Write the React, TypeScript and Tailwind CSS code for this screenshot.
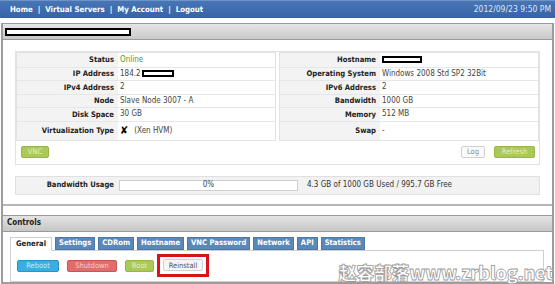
import React from "react";

const font = "font-['DejaVu_Sans_Condensed','DejaVu_Sans',sans-serif]";

type Row = { label: string; value: React.ReactNode; tall?: boolean };

function Redacted({ w }: { w: number }) {
  return (
    <span
      className="inline-block h-[7px] border-2 border-black bg-white align-middle"
      style={{ width: w }}
    />
  );
}

function InfoTable({ rows, labelW }: { rows: Row[]; labelW: string }) {
  return (
    <div className="flex-1 border border-[#e2e2e2]">
      {rows.map((r, i) => (
        <div
          key={r.label}
          className={`flex ${r.tall ? "h-[19px]" : "h-[13.5px]"} ${i > 0 ? "border-t border-[#e6e6e6]" : ""}`}
        >
          <div className={`${labelW} flex shrink-0 items-center justify-end bg-[#f3f3f3] pr-[4px] text-right text-[7.6px] font-bold text-[#222]`}>
            {r.label}
          </div>
          <div className="flex items-center pl-[2px] text-[#444]">{r.value}</div>
        </div>
      ))}
    </div>
  );
}

function Btn({ label, cls }: { label: string; cls: string }) {
  return (
    <span className={`inline-flex h-[12px] items-center justify-center rounded-[2px] border text-[7.5px] ${cls}`}>
      {label}
    </span>
  );
}

function Sep() {
  return <span className="mx-[5px]">|</span>;
}

export default function App() {
  const left: Row[] = [
    { label: "Status", value: <span className="text-[#4c9a2a]">Online</span> },
    { label: "IP Address", value: <span className="flex items-center gap-[1px]">184.2<Redacted w={32} /></span> },
    { label: "IPv4 Address", value: "2" },
    { label: "Node", value: "Slave Node 3007 - A" },
    { label: "Disk Space", value: "30 GB" },
    {
      label: "Virtualization Type",
      tall: true,
      value: (
        <span className="flex items-center gap-[6px]">
          <span className="text-[11px] font-bold leading-none text-black">✘</span>(Xen HVM)
        </span>
      ),
    },
  ];
  const right: Row[] = [
    { label: "Hostname", value: <Redacted w={40} /> },
    { label: "Operating System", value: "Windows 2008 Std SP2 32Bit" },
    { label: "IPv6 Address", value: "2" },
    { label: "Bandwidth", value: "1000 GB" },
    { label: "Memory", value: "512 MB" },
    { label: "Swap", value: "-", tall: true },
  ];
  const tabs = ["Settings", "CDRom", "Hostname", "VNC Password", "Network", "API", "Statistics"];

  return (
    <div className={`relative h-[284px] w-[555px] overflow-hidden bg-white text-[8px] ${font}`}>
      {/* top nav */}
      <div className="flex h-[18px] items-center justify-between border-t border-[#6f93c6] bg-gradient-to-b from-[#4775b6] to-[#3664a6] pl-[10px] pr-[4px]">
        <span className="text-[7.8px] font-bold text-white">
          Home<Sep />Virtual Servers<Sep />My Account<Sep />Logout
        </span>
        <span className="text-[8.5px] text-[#dfe7f3]">2012/09/23 9:50 PM</span>
      </div>

      <div className="ml-[1px] mt-[5px] h-[261px] w-[553px] border-x-2 border-b-2 border-[#9c9c9c]">
        {/* server title bar */}
        <div className="flex h-[17px] items-center border-y border-[#9a9a9a] bg-gradient-to-b from-[#e6e6e6] to-[#c9c9c9] pl-[2px]">
          <span className="inline-block h-[8px] w-[126px] border-2 border-black bg-white" />
        </div>

        {/* details */}
        <div className="border-b-2 border-[#b5b5b5] px-[12px] pb-[9px] pt-[11px]">
          <div className="border border-[#e2e2e2]">
            <div className="flex gap-[3px]">
              <InfoTable rows={left} labelW="w-[101px]" />
              <InfoTable rows={right} labelW="w-[100px]" />
            </div>
            <div className="flex h-[23px] items-center justify-between pl-[5px] pr-[4px]">
              <Btn label="VNC" cls="w-[28px] border-[#98b547] bg-[#abc957] text-[#e4efc6]" />
              <div className="flex gap-[9px]">
                <Btn label="Log" cls="w-[24px] border-[#cfcfcf] bg-[#fafafa] text-[#8a8a8a]" />
                <Btn label="Refresh" cls="w-[41px] border-[#98b547] bg-[#abc957] text-[#e4efc6]" />
              </div>
            </div>
          </div>

          <div className="mt-[11px] flex h-[19px] items-center border border-[#e0e0e0] bg-[#f2f2f2]">
            <div className="w-[101px] shrink-0 pr-[3px] text-right text-[7.6px] font-bold text-[#222]">Bandwidth Usage</div>
            <div className="ml-[2px] flex h-[11px] w-[179px] items-center justify-center border border-[#cfcfcf] bg-white text-[#444]">
              0%
            </div>
            <div className="ml-[9px] text-[#333]">4.3 GB of 1000 GB Used / 995.7 GB Free</div>
          </div>
        </div>

        {/* controls */}
        <div className="mt-[9px] flex h-[17px] items-center border-y border-[#9a9a9a] bg-gradient-to-b from-[#e4e4e4] to-[#c6c6c6] pl-[4px] text-[8px] font-bold text-[#222]">
          Controls
        </div>
        <div className="pl-[7px] pr-[8px] pt-[4px]">
          <div className="flex items-end gap-[3px]">
            <span className="relative top-[1px] flex h-[14px] items-center border border-b-0 border-[#cfcfcf] bg-white px-[5px] text-[7.6px] font-bold text-[#222]">
              General
            </span>
            {tabs.map((t) => (
              <span
                key={t}
                className="flex h-[13px] items-center border border-[#4d78a8] bg-[#5c88b9] px-[3px] text-[7.6px] font-bold text-white"
              >
                {t}
              </span>
            ))}
          </div>
          <div className="flex h-[32px] items-center gap-[8px] border border-[#cfcfcf] pl-[6px]">
            <Btn label="Reboot" cls="w-[42px] border-[#2b93c4] bg-[#3aaee0] text-[#c6ebfa]" />
            <Btn label="Shutdown" cls="w-[50px] border-[#c75656] bg-[#e06c6c] text-[#f8cccc]" />
            <Btn label="Boot" cls="w-[29px] border-[#98b547] bg-[#abc957] text-[#e4efc6]" />
            <span className="-ml-[5px] border-[3px] border-[#d9121b] px-[3px] py-[2px]">
              <Btn label="Reinstall" cls="w-[40px] border-[#d2d2d2] bg-[#f5f5f5] text-[#555]" />
            </span>
          </div>
        </div>
      </div>

      {/* watermark */}
      <div className="absolute bottom-[3px] right-[2px] font-['Noto_Sans_CJK_SC',sans-serif] text-[18px] font-black leading-none tracking-[-0.3px] text-white [-webkit-text-stroke:0.8px_#9a9a9a]">
        赵容部落www.zrblog.net
      </div>
    </div>
  );
}
